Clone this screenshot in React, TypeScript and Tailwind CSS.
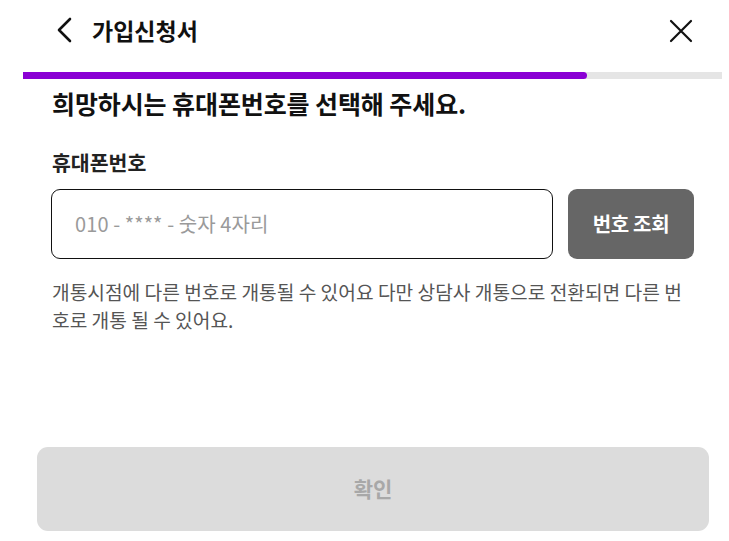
import React from "react";

export default function App() {
  return (
    <div
      className="w-[729px] h-[541px] bg-white overflow-hidden flex flex-col"
      style={{ fontFamily: '"Noto Sans CJK KR", "Noto Sans", sans-serif' }}
    >
      <div className="h-[62px] flex items-center justify-between pl-[55px] pr-[36px]">
        <div className="flex items-center gap-[17px] -mt-[2px]">
          <svg width="20" height="26" viewBox="0 0 20 26" fill="none">
            <path d="M15 2 L4 13 L15 24" stroke="#111" strokeWidth="2.6" strokeLinecap="round" strokeLinejoin="round" />
          </svg>
          <span className="text-[23px] font-bold text-[#111] leading-none">가입신청서</span>
        </div>
        <svg width="24" height="24" viewBox="0 0 24 24" fill="none">
          <path d="M2 2 L22 22 M22 2 L2 22" stroke="#111" strokeWidth="2.2" strokeLinecap="round" />
        </svg>
      </div>
      <div className="mt-[10px] ml-[23px] mr-[7px] h-[7px] bg-[#e5e5e5]">
        <div className="h-full w-[564px] bg-[#8a00d4] rounded-r-full" />
      </div>
      <div className="px-[52px]">
        <h1 className="mt-[8px] text-[25px] font-bold text-[#111] leading-[32px] tracking-[-0.1px]">
          희망하시는 휴대폰번호를 선택해 주세요.
        </h1>
        <div className="mt-[29px] text-[20.5px] font-bold text-[#222] leading-[28px]">휴대폰번호</div>
      </div>
      <div className="mt-[13px] pl-[51px] pr-[35px] flex gap-[15px]">
        <div className="flex-1 h-[70px] border border-[#111] rounded-[9px] flex items-center pl-[23px]">
          <span className="text-[20px] text-[#9a9a9a] tracking-[0.1px]">010 - **** - 숫자 4자리</span>
        </div>
        <div className="w-[126px] h-[70px] rounded-[9px] bg-[#666666] flex items-center justify-center">
          <span className="text-[20px] font-bold text-white tracking-[-0.3px]">번호 조회</span>
        </div>
      </div>
      <p className="mt-[19px] px-[52px] pr-[36px] text-[19.2px] leading-[28px] text-[#555] break-all">
        개통시점에 다른 번호로 개통될 수 있어요 다만 상담사 개통으로 전환되면 다른 번호로 개통 될 수 있어요.
      </p>
      <div className="mt-auto mb-[10px] ml-[37px] mr-[20px] h-[84px] rounded-[11px] bg-[#dcdcdc] flex items-center justify-center">
        <span className="text-[21px] font-bold text-[#a8a8a8]">확인</span>
      </div>
    </div>
  );
}
